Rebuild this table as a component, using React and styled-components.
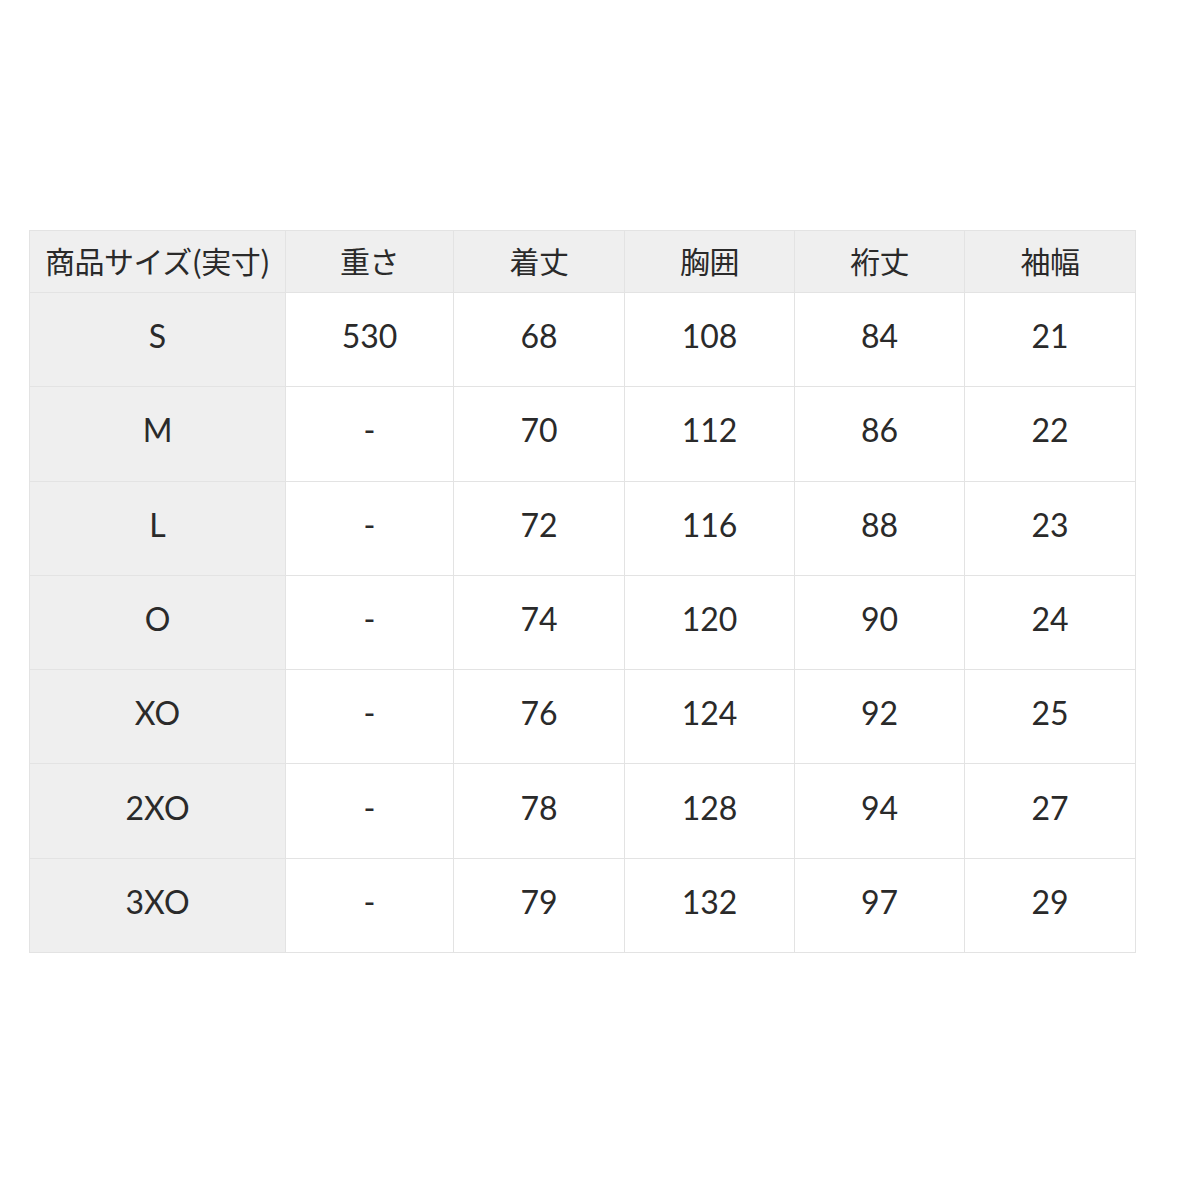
import React from "react";
import styled, { createGlobalStyle } from "styled-components";

const GlobalStyle = createGlobalStyle`
  html, body {
    margin: 0;
    padding: 0;
    background: #fff;
  }
  body {
    font-family: "Lato", "Noto Sans CJK JP", sans-serif;
    color: #222;
  }
`;

const Page = styled.div`
  width: 1200px;
  height: 1200px;
  padding: 230px 0 0 29px;
  box-sizing: border-box;
`;

const Table = styled.table`
  border-collapse: collapse;
  table-layout: fixed;
  width: 1106px;
`;

const Cell = styled.td`
  border: 1px solid #e3e3e3;
  text-align: center;
  height: ${(p) => (p.$head ? "62px" : "94.3px")};
  padding: ${(p) => (p.$head ? "0 0 3px" : "0 0 8px")};
  box-sizing: border-box;
  background: ${(p) => (p.$shade ? "#efefef" : "#fff")};
  color: #2a2a2a;
  font-weight: 400;
  font-family: ${(p) =>
    p.$head
      ? '"Noto Sans CJK JP", sans-serif'
      : '"Lato", "Noto Sans CJK JP", sans-serif'};
  font-size: ${(p) => (p.$head ? "30px" : "32px")};
  letter-spacing: ${(p) => (p.$head ? "-0.5px" : "0")};
  white-space: nowrap;
`;

const widths = [256, 168, 171, 170, 170, 171];
const headers = ["商品サイズ(実寸)", "重さ", "着丈", "胸囲", "裄丈", "袖幅"];
const rows = [
  ["S", "530", "68", "108", "84", "21"],
  ["M", "-", "70", "112", "86", "22"],
  ["L", "-", "72", "116", "88", "23"],
  ["O", "-", "74", "120", "90", "24"],
  ["XO", "-", "76", "124", "92", "25"],
  ["2XO", "-", "78", "128", "94", "27"],
  ["3XO", "-", "79", "132", "97", "29"],
];

export default function App() {
  return (
    <>
      <GlobalStyle />
      <Page>
        <Table>
          <colgroup>
            {widths.map((w, i) => (
              <col key={i} style={{ width: w }} />
            ))}
          </colgroup>
          <thead>
            <tr>
              {headers.map((h) => (
                <Cell as="th" key={h} $head $shade>
                  {h}
                </Cell>
              ))}
            </tr>
          </thead>
          <tbody>
            {rows.map((r) => (
              <tr key={r[0]}>
                {r.map((v, i) => (
                  <Cell key={i} $shade={i === 0}>
                    {v}
                  </Cell>
                ))}
              </tr>
            ))}
          </tbody>
        </Table>
      </Page>
    </>
  );
}
